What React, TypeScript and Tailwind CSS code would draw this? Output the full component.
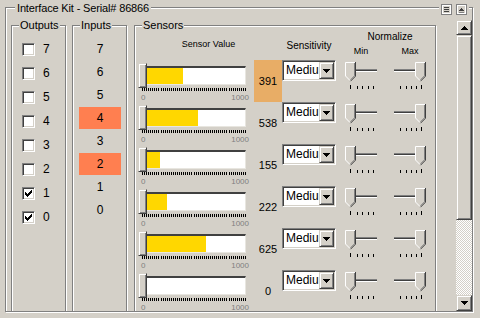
import React from "react";

const raised =
  "border border-t-[#d4d0c8] border-l-[#d4d0c8] border-r-[#404040] border-b-[#404040] bg-[#d4d0c8] shadow-[inset_1px_1px_0_#fff,inset_-1px_-1px_0_#808080]";
const sunken =
  "border border-t-[#808080] border-l-[#808080] border-r-white border-b-white shadow-[inset_1px_1px_0_#404040,inset_-1px_-1px_0_#d4d0c8]";
const etched = "border border-[#808080] shadow-[inset_1px_1px_0_#fff,1px_1px_0_#fff]";

const outputs = [
  { n: 7, on: false },
  { n: 6, on: false },
  { n: 5, on: false },
  { n: 4, on: false },
  { n: 3, on: false },
  { n: 2, on: false },
  { n: 1, on: true },
  { n: 0, on: true },
];

const inputs = [
  { n: 7, hot: false },
  { n: 6, hot: false },
  { n: 5, hot: false },
  { n: 4, hot: true },
  { n: 3, hot: false },
  { n: 2, hot: true },
  { n: 1, hot: false },
  { n: 0, hot: false },
];

const sensors = [391, 538, 155, 222, 625, 0];

function Tri({ up }: { up?: boolean }) {
  const rows = [
    [0, 7],
    [1, 5],
    [2, 3],
    [3, 1],
  ];
  return (
    <svg width="7" height="4" shapeRendering="crispEdges" className="block">
      {rows.map(([o, w], i) => (
        <rect key={i} x={o} y={up ? 3 - i : i} width={w} height="1" fill="#000" />
      ))}
    </svg>
  );
}

function Check() {
  // classic 7x7 check mark
  const px: [number, number, number][] = [
    [0, 6, 1],
    [1, 5, 2],
    [2, 0, 1],
    [2, 4, 3],
    [3, 0, 2],
    [3, 3, 3],
    [4, 0, 5],
    [5, 1, 3],
    [6, 2, 1],
  ];
  return (
    <svg width="7" height="7" shapeRendering="crispEdges" className="block">
      {px.map(([y, x, w], i) => (
        <rect key={i} x={x} y={y} width={w} height="1" fill="#000" />
      ))}
    </svg>
  );
}

function Group({
  label,
  className,
  children,
}: {
  label: string;
  className?: string;
  children?: React.ReactNode;
}) {
  return (
    <div className={`relative shrink-0 ${etched} ${className ?? ""}`}>
      <span className="absolute top-[-7px] left-[7px] px-[1px] bg-[#d4d0c8] text-[11px] leading-[13px] whitespace-nowrap">
        {label}
      </span>
      {children}
    </div>
  );
}

function Ticks() {
  return (
    <svg width="105" height="3" shapeRendering="crispEdges" className="block ml-[4px]">
      {Array.from({ length: 51 }).map((_, i) => (
        <rect key={i} x={Math.round(i * 2.06)} y="0" width="1" height="3" fill="#000" />
      ))}
    </svg>
  );
}

function NormSlider({ side }: { side: "min" | "max" }) {
  const tx = side === "min" ? 0 : 21;
  const trackX = side === "min" ? 11 : 0;
  const ticks = side === "min" ? [5, 12, 17, 23, 28] : [6, 12, 17, 22, 27];
  const tall = side === "min" ? 0 : 4;
  return (
    <svg width="32" height="30" className="block">
      <g shapeRendering="crispEdges">
        <rect x={trackX} y="9" width="21" height="1" fill="#808080" />
        <rect x={trackX} y="10" width="21" height="1" fill="#404040" />
        <rect x={trackX} y="11" width="21" height="1" fill="#fff" />
        {ticks.map((x, i) => (
          <rect key={i} x={x} y={i === tall ? 25 : 26} width="1" height={i === tall ? 4 : 3} fill="#000" />
        ))}
      </g>
      <g transform={`translate(${tx} 0)`}>
        <polygon points="0,2 11,2 11,16 5.5,21.5 0,16" fill="#d4d0c8" />
        <polyline points="0.5,16 0.5,2.5 10,2.5" fill="none" stroke="#fff" />
        <polyline points="0.5,16 5,20.5" fill="none" stroke="#fff" />
        <polyline points="9.5,3 9.5,15.8 5.5,19.8" fill="none" stroke="#808080" />
        <polyline points="10.5,2 10.5,16.2 5.5,21.2" fill="none" stroke="#404040" />
      </g>
    </svg>
  );
}

function Dropdown() {
  return (
    <div className={`w-[54px] h-[21px] shrink-0 flex p-[1px] bg-white ${sunken}`}>
      <div className="flex-1 overflow-hidden pl-[2px] text-[12px] leading-[17px] whitespace-nowrap">Medium</div>
      <div className={`w-[15px] h-full flex items-center justify-center ${raised}`}>
        <Tri />
      </div>
    </div>
  );
}

function SensorRow({ value, hot }: { value: number; hot?: boolean }) {
  const fill = Math.max(0, Math.round(value * 0.098 - 2.2));
  return (
    <div className="flex h-[42px] pl-[3px] shrink-0">
      <div className="w-[116px] shrink-0 flex flex-col pt-[3px]">
        <div className="flex h-[25px]">
          <div className={`w-[9px] h-[25px] ${raised}`} />
          <div className="w-[99px] h-[19px] mt-[3px] bg-white border-t-2 border-t-[#404040] border-r border-b border-r-[#e8e6e0] border-b-[#e8e6e0]">
            <div className="h-full bg-[#ffd700]" style={{ width: fill }} />
          </div>
        </div>
        <Ticks />
        <div className="flex justify-between pl-[3px] pr-[5px] mt-[2px] text-[8px] leading-[9px] text-[#808080]">
          <span>0</span>
          <span>1000</span>
        </div>
      </div>
      <div
        className={`w-[28px] h-[42px] shrink-0 flex items-center justify-center text-[11px] ${
          hot ? "bg-[#e8ad66]" : ""
        }`}
      >
        {value}
      </div>
      <Dropdown />
      <div className="ml-[9px]">
        <NormSlider side="min" />
      </div>
      <div className="ml-[17px]">
        <NormSlider side="max" />
      </div>
    </div>
  );
}

function Scrollbar() {
  return (
    <div className="w-[16px] h-[291px] shrink-0 flex flex-col">
      <div className={`h-[15px] flex items-center justify-center ${raised}`}>
        <Tri up />
      </div>
      <div className={`h-[185px] ${raised}`} />
      <div className="flex-1 bg-[image:repeating-conic-gradient(#fff_0%_25%,#d4d0c8_0%_50%)] bg-[length:2px_2px]" />
      <div className={`h-[16px] flex items-center justify-center ${raised}`}>
        <Tri />
      </div>
    </div>
  );
}

function FrameIcon({ kind }: { kind: "list" | "eject" }) {
  return (
    <svg width="11" height="11" shapeRendering="crispEdges" className="block">
      <rect x="0.5" y="0.5" width="10" height="10" fill="#d4d0c8" stroke="#808080" />
      <rect x="1.5" y="1.5" width="8" height="8" fill="none" stroke="#fff" />
      {kind === "list" ? (
        <>
          <rect x="3" y="3" width="5" height="1" fill="#404040" />
          <rect x="3" y="5" width="5" height="1" fill="#404040" />
          <rect x="3" y="7" width="5" height="1" fill="#404040" />
        </>
      ) : (
        <>
          <rect x="5" y="4" width="1" height="1" fill="#404040" />
          <rect x="4" y="5" width="3" height="1" fill="#404040" />
          <rect x="3" y="6" width="5" height="1" fill="#404040" />
          <rect x="3" y="8" width="5" height="1" fill="#808080" />
        </>
      )}
    </svg>
  );
}

export default function App() {
  return (
    <div className="w-[480px] h-[318px] bg-[#d4d0c8] pt-[7px] pl-[5px] overflow-hidden font-['Liberation_Sans',Arial,sans-serif] text-black select-none">
      <div className={`relative w-[468px] h-[305px] flex pt-[12px] ${etched}`}>
        <span className="absolute top-[-6px] left-[9px] px-[2px] bg-[#d4d0c8] text-[11px] leading-[13px] tracking-[-0.15px] whitespace-nowrap">
          Interface Kit - Serial# 86866
        </span>
        <div className="absolute top-[-4px] right-[3px] flex gap-[4px] px-[2px] bg-[#d4d0c8]">
          <FrameIcon kind="list" />
          <FrameIcon kind="eject" />
        </div>

        {/* scrolling content */}
        <div className="flex-1 h-[291px] overflow-hidden flex items-start pl-[5px] pt-[5px]">
          <Group label="Outputs" className="w-[55px] h-[300px]">
            <div className="flex flex-col gap-[11px] pt-[17px] pl-[10px]">
              {outputs.map((o) => (
                <div key={o.n} className="flex items-center gap-[8px] h-[13px]">
                  <div className={`w-[13px] h-[13px] bg-white flex items-center justify-center ${sunken}`}>
                    {o.on && <Check />}
                  </div>
                  <span className="text-[12px] leading-[13px]">{o.n}</span>
                </div>
              ))}
            </div>
          </Group>

          <Group label="Inputs" className="ml-[6px] w-[55px] h-[300px]">
            <div className="flex flex-col gap-[1px] pt-[12px] pl-[6px]">
              {inputs.map((i) => (
                <div
                  key={i.n}
                  className={`w-[42px] h-[22px] flex items-center justify-center text-[12px] ${
                    i.hot ? "bg-[#ff7f50]" : ""
                  }`}
                >
                  {i.n}
                </div>
              ))}
            </div>
          </Group>

          <Group label="Sensors" className="ml-[7px] w-[302px] h-[300px]">
            <div className="flex h-[34px] pl-[3px]">
              <div className="w-[141px] pt-[13px] text-center text-[9px] leading-[11px]">Sensor Value</div>
              <div className="ml-[3px] w-[54px] pt-[14px] text-center text-[10px] leading-[12px]">Sensitivity</div>
              <div className="ml-[9px] w-[81px] flex flex-col pt-[5px]">
                <div className="pl-[9px] text-center text-[10px] leading-[12px]">Normalize</div>
                <div className="flex mt-[2px] text-[9px] leading-[12px]">
                  <span className="w-[32px] text-center">Min</span>
                  <span className="ml-[17px] w-[32px] text-center">Max</span>
                </div>
              </div>
            </div>
            <div className="flex flex-col">
              {sensors.map((v, i) => (
                <SensorRow key={i} value={v} hot={i === 0} />
              ))}
            </div>
          </Group>
        </div>

        <Scrollbar />
      </div>
    </div>
  );
}
